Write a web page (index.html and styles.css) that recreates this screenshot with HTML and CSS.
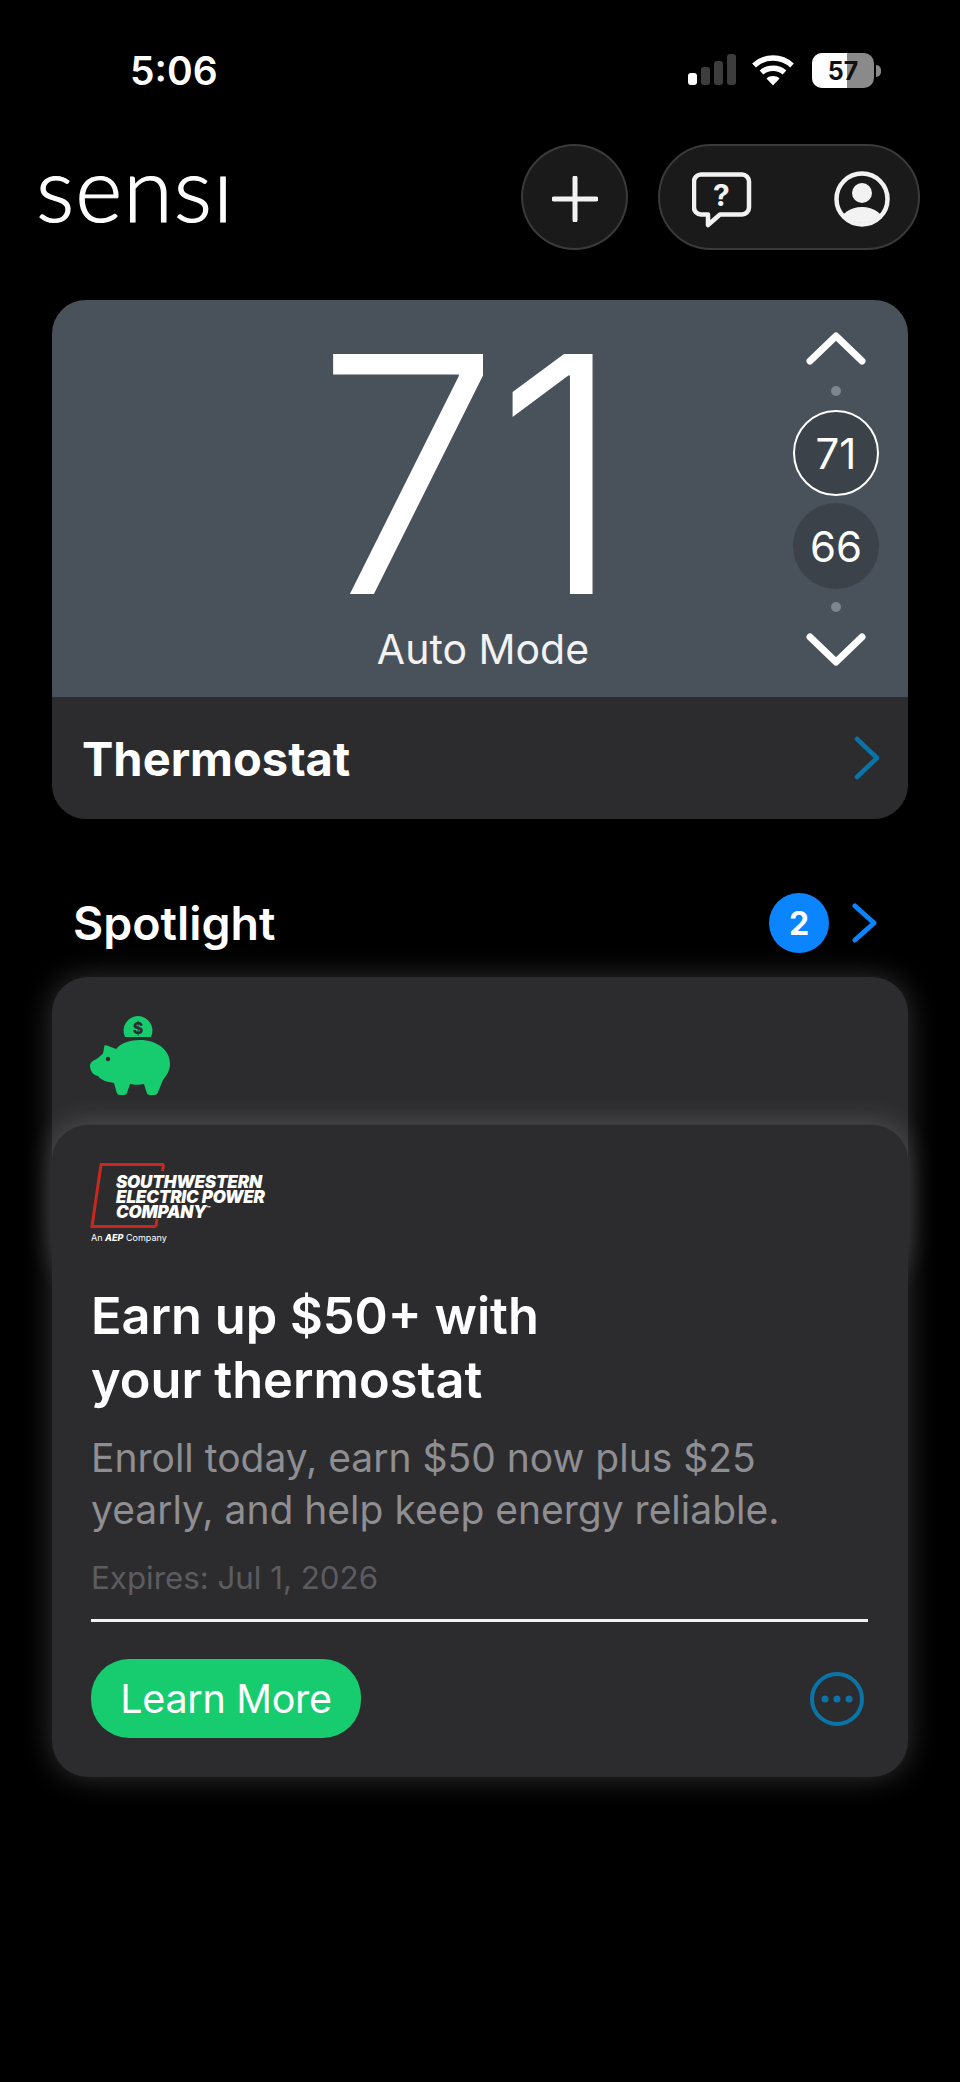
FILE: index.html
```html
<!DOCTYPE html>
<html lang="en">
<head>
<meta charset="utf-8">
<title>Sensi</title>
<link rel="stylesheet" href="styles.css">
</head>
<body>
<div class="screen">
  <div class="status">
    <span class="time">5:06</span>
    <div class="status-icons">
      <svg class="signal" width="48" height="32" viewBox="0 0 48 32"><rect x="0" y="19" width="9" height="12" rx="3" fill="#fff"/><rect x="13" y="13" width="9" height="18" rx="3" fill="#3d3d3d"/><rect x="26" y="7" width="9" height="24" rx="3" fill="#3d3d3d"/><rect x="39" y="0" width="9" height="31" rx="3" fill="#3d3d3d"/></svg>
      <svg class="wifi" width="44" height="32" viewBox="0 0 44 32"><g fill="none" stroke="#fff" stroke-width="5.4"><path d="M3 11.5C13.500 1.500 30.500 1.500 41 11.500"/><path d="M10.500 18.500C16.500 12.800 27.500 12.800 33.500 18.500"/></g><path d="M15.500 24.500C19 21.300 25 21.300 28.500 24.500L22 31.500Z" fill="#fff"/></svg>
      <div class="battery"><div class="battery-body"><span class="battery-fill"></span><span class="battery-num">57</span></div><span class="battery-nub"></span></div>
    </div>
  </div>

  <header class="topbar">
    <div class="logo">sensı</div>
    <div class="actions">
      <button class="round-btn" aria-label="Add">
        <svg width="46" height="46" viewBox="0 0 46 46"><path d="M23 2V44M2 23H44" stroke="#f2f2f2" stroke-width="5" stroke-linecap="round"/></svg>
      </button>
      <div class="pill">
        <svg class="help" width="60" height="56" viewBox="0 0 60 56"><path d="M9 2.500H50A7 7 0 0 1 57 9.500V35.500A7 7 0 0 1 50 42.500H28L16 53V42.500H9A7 7 0 0 1 2 35.500V9.500A7 7 0 0 1 9 2.500Z" fill="none" stroke="#f2f2f2" stroke-width="4.500" stroke-linejoin="round"/><text x="29.500" y="34" class="help-q">?</text></svg>
        <svg class="user" width="56" height="56" viewBox="0 0 56 56"><defs><clipPath id="uc"><circle cx="28" cy="28" r="24"/></clipPath></defs><circle cx="28" cy="28" r="25.500" fill="none" stroke="#f2f2f2" stroke-width="4.500"/><circle cx="28" cy="22" r="10" fill="#f2f2f2"/><ellipse cx="28" cy="52" rx="22" ry="16" fill="#f2f2f2" clip-path="url(#uc)"/></svg>
      </div>
    </div>
  </header>

  <section class="thermostat">
    <div class="thermo-top">
      <div class="temp-block">
        <div class="temp">71</div>
        <div class="mode">Auto Mode</div>
      </div>
      <div class="setpoints">
        <svg class="chev" width="60" height="36" viewBox="0 0 60 36"><path d="M4 30L30 5L56 30" fill="none" stroke="#fff" stroke-width="7" stroke-linecap="round" stroke-linejoin="round"/></svg>
        <span class="dot"></span>
        <div class="set set-active">71</div>
        <div class="set">66</div>
        <span class="dot dot-low"></span>
        <svg class="chev" width="60" height="36" viewBox="0 0 60 36"><path d="M4 6L30 31L56 6" fill="none" stroke="#fff" stroke-width="7" stroke-linecap="round" stroke-linejoin="round"/></svg>
      </div>
    </div>
    <div class="thermo-bottom">
      <span class="thermo-title">Thermostat</span>
      <svg width="26" height="44" viewBox="0 0 26 44"><path d="M3 3L23 22L3 41" fill="none" stroke="#0a74a8" stroke-width="4.500" stroke-linecap="round" stroke-linejoin="round"/></svg>
    </div>
  </section>

  <section class="spotlight-head">
    <h2>Spotlight</h2>
    <div class="spot-right">
      <span class="badge">2</span>
      <svg width="28" height="40" viewBox="0 0 28 40"><path d="M4 3L23 20L4 37" fill="none" stroke="#0a84ff" stroke-width="5" stroke-linecap="round" stroke-linejoin="round"/></svg>
    </div>
  </section>

  <section class="stack">
    <div class="card card-back">
      <svg class="pig" width="82" height="80" viewBox="0 0 82 80">
        <path d="M35 21A14.500 14.500 0 1 1 61 21Z" fill="#17cc6f"/>
        <text x="48" y="18" class="coin">$</text>
        <path d="M0 49C1 45 5 44 8 42L13 37.500L14.500 29.500C15 29 16 29 17 29.500L26 33C31 27 40 24 50 24C67 24 80 34 80 48C80 55 76 60 73 64L68 76C67.500 78 66 79 64 79H60C58 79 57 78 56.500 76L54 68C50 69 44 69 40 68L37 77C36.500 78.500 35 79 33 79H30C28 79 27 78 26.500 76L24 67C17 66 11 64 8 60C3 59 0 55 0 49Z" fill="#17cc6f"/>
        <circle cx="18" cy="43" r="2.200" fill="#2c2c2e"/>
      </svg>
    </div>
    <div class="card card-front">
      <div class="aep">
        <svg class="aep-frame" width="76" height="66" viewBox="0 0 76 66"><path d="M74 1.500H11L2 63.500H66" fill="none" stroke="#c9281e" stroke-width="3"/><path d="M73.500 1.500L72.500 8M66 63.500L67 56" fill="none" stroke="#c9281e" stroke-width="3"/></svg>
        <div class="aep-name"><span>SOUTHWESTERN</span><span>ELECTRIC POWER</span><span>COMPANY<sup>™</sup></span></div>
        <div class="aep-sub">An <b>AEP</b> Company</div>
      </div>
      <h3>Earn up $50+ with<br>your thermostat</h3>
      <p class="desc">Enroll today, earn $50 now plus $25<br>yearly, and help keep energy reliable.</p>
      <p class="expires">Expires: Jul 1, 2026</p>
      <hr class="rule">
      <div class="card-actions">
        <button class="learn">Learn More</button>
        <svg width="56" height="56" viewBox="0 0 56 56"><circle cx="28" cy="28" r="25" fill="none" stroke="#0a74a8" stroke-width="4"/><circle cx="16" cy="28" r="3.500" fill="#0a74a8"/><circle cx="28" cy="28" r="3.500" fill="#0a74a8"/><circle cx="40" cy="28" r="3.500" fill="#0a74a8"/></svg>
      </div>
    </div>
  </section>
</div>
</body>
</html>
```

FILE: styles.css
```css
* { box-sizing: border-box; }
html, body { margin: 0; padding: 0; background: #000; }
body { font-family: Inter, "Liberation Sans", sans-serif; color: #fff; }
.screen { width: 960px; height: 2082px; overflow: hidden; background: #000; }

.status { height: 144px; padding: 47px 79px 0 130px; display: flex; justify-content: space-between; align-items: flex-start; }
.time { font-size: 39px; font-weight: 600; line-height: 48px; }
.status-icons { display: flex; align-items: flex-start; gap: 17px; padding-top: 7px; margin-left: auto; }
.signal { margin-left: 2px; margin-right: -2px; }
.battery { display: flex; align-items: center; margin-top: -1px; margin-left: 0; }
.battery-body { position: relative; width: 62px; height: 35px; border-radius: 10px; background: #8a8a8a; overflow: hidden; display: flex; align-items: center; justify-content: center; }
.battery-fill { position: absolute; left: 0; top: 0; bottom: 0; width: 57%; background: #fff; }
.battery-num { position: relative; color: #111; font-size: 25px; font-weight: 700; }
.battery-nub { width: 5px; height: 12px; margin-left: 2px; background: #8a8a8a; border-radius: 0 6px 6px 0; }

.topbar { height: 106px; padding: 0 40px 0 36px; display: flex; align-items: center; justify-content: space-between; }
.logo { font-family: Lato, sans-serif; font-weight: 300; font-size: 90px; line-height: 106px; letter-spacing: 1px; position: relative; top: -10px; -webkit-text-stroke: 1.2px #fff; }
.actions { display: flex; gap: 30px; }
.round-btn { width: 107px; height: 106px; padding: 3px 0 0; border-radius: 50%; background: #1a1a1a; border: 2px solid #3a3a3a; display: flex; align-items: center; justify-content: center; }
.pill { width: 262px; height: 106px; border-radius: 53px; background: #1a1a1a; border: 2px solid #3a3a3a; display: flex; align-items: center; justify-content: space-between; padding: 3px 28px 0 32px; }
.help { margin-top: 3px; }
.help-q { font-family: Inter, sans-serif; font-size: 30px; font-weight: 700; fill: #f2f2f2; text-anchor: middle; }

.thermostat { margin: 50px 52px 0; border-radius: 34px; height: 519px; background: #2c2c2e; }
.thermo-top { height: 397px; background: #49525b; border-radius: 34px 34px 0 0; display: flex; }
.temp-block { flex: 1; padding-left: 130px; display: flex; flex-direction: column; align-items: center; }
.temp { font-size: 330px; font-weight: 260; line-height: 290px; margin: 29px 32px 0 0; height: 290px; letter-spacing: -6px; }
.mode { font-size: 41px; line-height: 48px; margin-top: 6px; color: #f2f2f2; }
.setpoints { width: 124px; padding-right: 20px; display: flex; flex-direction: column; align-items: center; padding-top: 31px; }
.chev { display: block; flex: none; }
.dot { width: 10px; height: 10px; border-radius: 50%; background: #7e858d; margin: 19px 0 14px; }
.dot-low { margin: 6px 0 19px; }
.set { width: 86px; height: 86px; flex: none; border-radius: 50%; background: #3c4249; display: flex; align-items: center; justify-content: center; font-size: 42px; font-weight: 400; margin-bottom: 7px; }
.set-active { border: 2px solid #fff; }
.thermo-bottom { height: 122px; padding: 0 28px 0 30px; display: flex; align-items: center; justify-content: space-between; }
.thermo-title { font-size: 47px; font-weight: 700; }

.spotlight-head { margin: 60px 0 10px; height: 88px; padding: 0 81px 0 73px; display: flex; align-items: center; justify-content: space-between; }
.spotlight-head h2 { margin: 0; font-size: 46.500px; font-weight: 600; }
.spot-right { display: flex; align-items: center; gap: 22px; }
.badge { width: 60px; height: 60px; border-radius: 50%; background: #0a84ff; display: flex; align-items: center; justify-content: center; font-size: 32px; font-weight: 700; }

.stack { margin: 0 52px; }
.card { background: #2c2c2e; border-radius: 36px; box-shadow: 0 0 30px rgba(255,255,255,.2); }
.card-back { height: 300px; padding: 39px 38px 0; }
.card-front { position: relative; height: 653px; margin-top: -153px; padding: 38px 39px 0; border-top: 1px solid #3a3a3c; }
.aep { position: relative; width: 180px; height: 84px; margin-left: -1px; }
.aep-frame { position: absolute; left: 0; top: 0; }
.aep-name { position: absolute; left: 26px; top: 12px; display: flex; flex-direction: column; font-family: Inter, sans-serif; font-weight: 900; font-style: italic; font-size: 17px; line-height: 15px; letter-spacing: -.2px; white-space: nowrap; }
.aep-name sup { font-size: 6px; line-height: 0; }
.aep-sub { position: absolute; left: 1px; top: 70px; font-size: 9px; line-height: 10px; white-space: nowrap; }
.aep-sub b { font-weight: 800; font-style: italic; }
h3 { margin: 37px 0 0; font-size: 50.500px; line-height: 64px; font-weight: 600; }
.desc { margin: 20px 0 0; font-size: 39px; line-height: 52px; color: #8e8e93; }
.expires { margin: 22px 0 0; font-size: 31.300px; line-height: 40px; color: #5c5c60; }
.rule { margin: 21px 0 0; width: 777px; height: 3px; border: 0; background: #f2f2f2; }
.card-actions { margin-top: 37px; width: 777px; display: flex; align-items: center; justify-content: space-between; padding-right: 3px; }
.learn { width: 270px; height: 79px; border: 0; padding: 0; border-radius: 38px; background: #17cc6f; color: #fff; font-family: Inter, sans-serif; font-size: 39.500px; letter-spacing: -.3px; }
.coin { font-family: Inter, sans-serif; font-size: 16px; font-weight: 800; fill: #2c2c2e; text-anchor: middle; }
```
